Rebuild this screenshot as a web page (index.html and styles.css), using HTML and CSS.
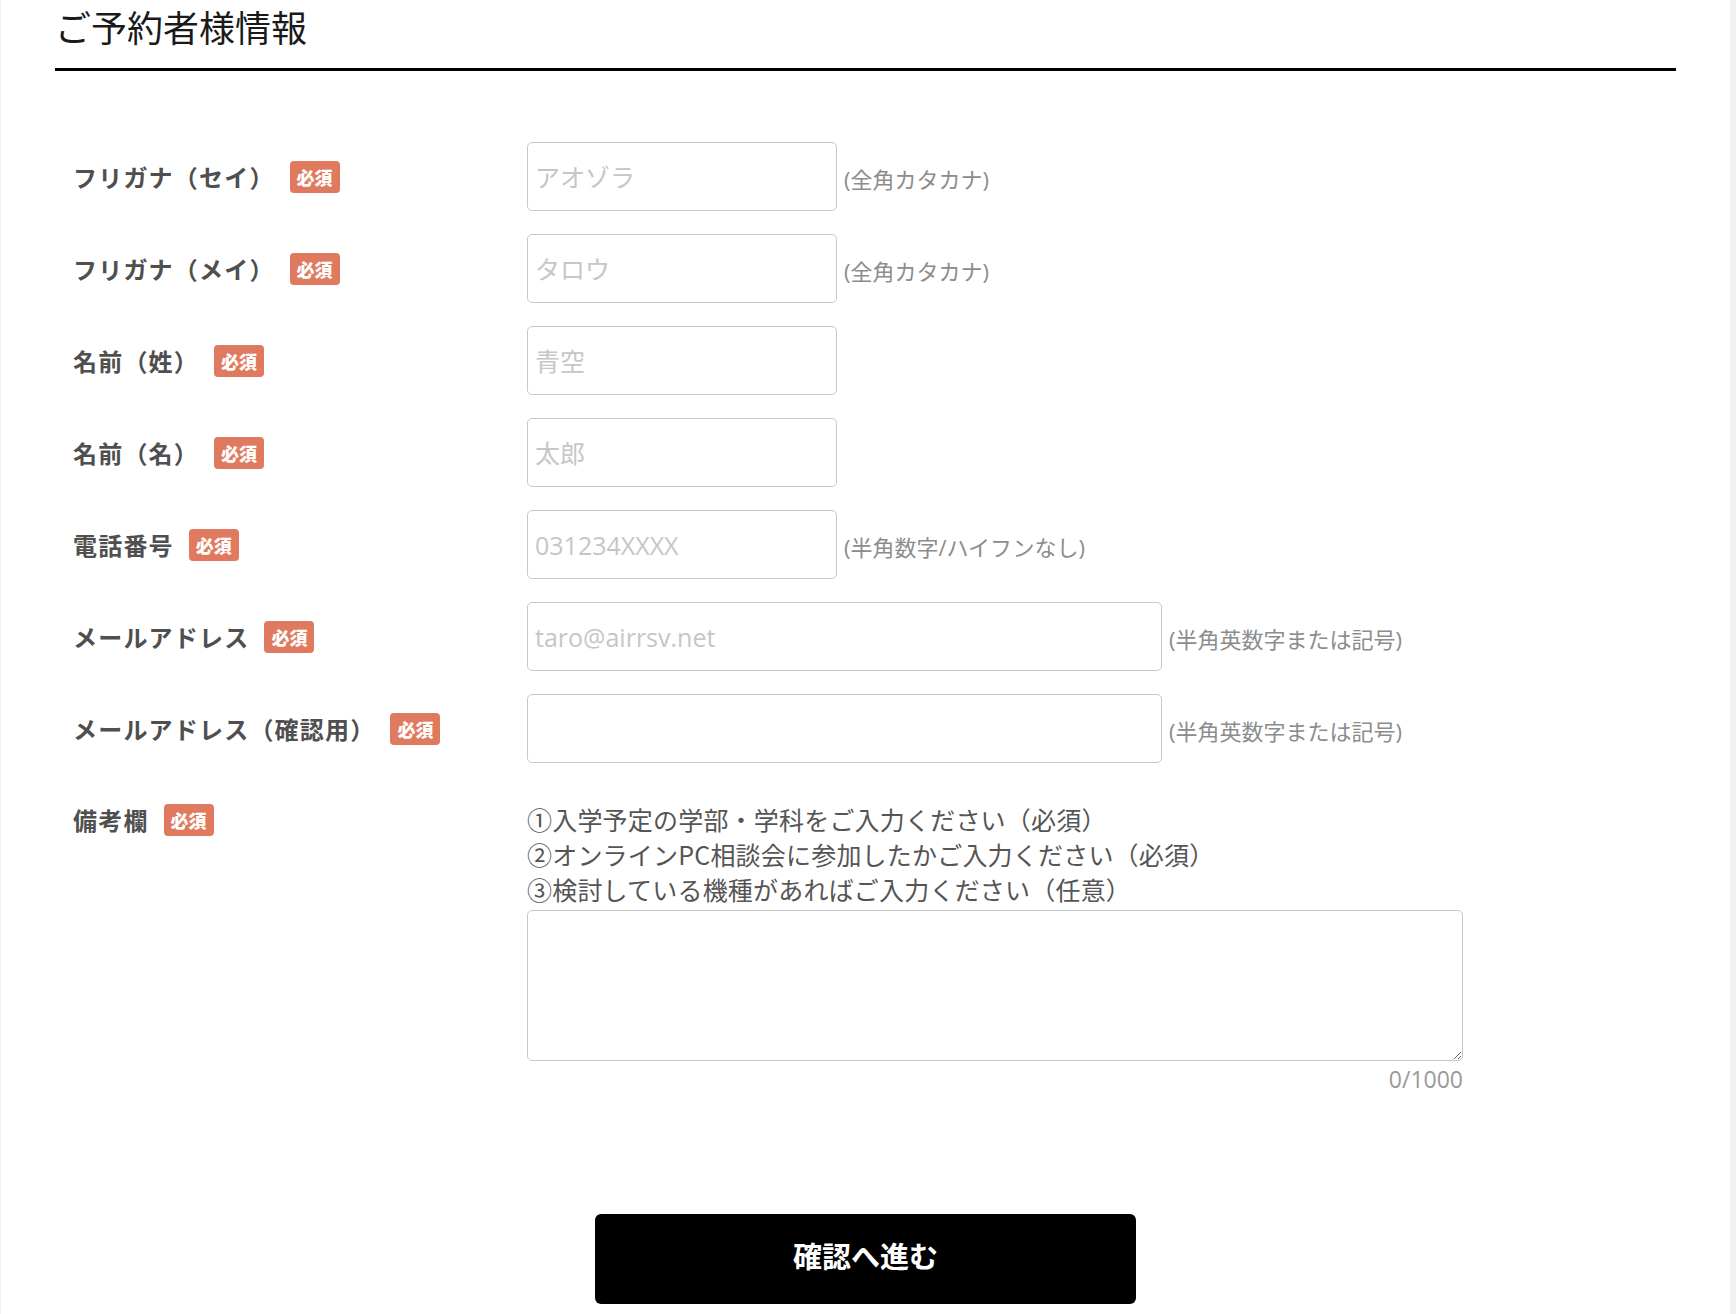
FILE: index.html
```html
<!DOCTYPE html>
<html lang="ja">
<head>
<meta charset="utf-8">
<title>ご予約者様情報</title>
<link rel="stylesheet" href="styles.css">
</head>
<body>
<div class="page">
  <h2 class="section-title">ご予約者様情報</h2>
  <form class="form">
    <div class="row">
      <div class="label"><span class="label-text">フリガナ（セイ）</span><span class="badge">必須</span></div>
      <div class="field"><input class="input" type="text" placeholder="アオゾラ"><span class="hint">(全角カタカナ)</span></div>
    </div>
    <div class="row">
      <div class="label"><span class="label-text">フリガナ（メイ）</span><span class="badge">必須</span></div>
      <div class="field"><input class="input" type="text" placeholder="タロウ"><span class="hint">(全角カタカナ)</span></div>
    </div>
    <div class="row">
      <div class="label"><span class="label-text">名前（姓）</span><span class="badge">必須</span></div>
      <div class="field"><input class="input" type="text" placeholder="青空"></div>
    </div>
    <div class="row">
      <div class="label"><span class="label-text">名前（名）</span><span class="badge">必須</span></div>
      <div class="field"><input class="input" type="text" placeholder="太郎"></div>
    </div>
    <div class="row">
      <div class="label"><span class="label-text">電話番号</span><span class="badge">必須</span></div>
      <div class="field"><input class="input" type="text" placeholder="031234XXXX"><span class="hint">(半角数字/ハイフンなし)</span></div>
    </div>
    <div class="row">
      <div class="label"><span class="label-text">メールアドレス</span><span class="badge">必須</span></div>
      <div class="field"><input class="input input-wide" type="text" placeholder="taro@airrsv.net"><span class="hint">(半角英数字または記号)</span></div>
    </div>
    <div class="row">
      <div class="label"><span class="label-text">メールアドレス（確認用）</span><span class="badge">必須</span></div>
      <div class="field"><input class="input input-wide" type="text"><span class="hint">(半角英数字または記号)</span></div>
    </div>
    <div class="row row-top">
      <div class="label label-top"><span class="label-text">備考欄</span><span class="badge">必須</span></div>
      <div class="field-col">
        <p class="note">①入学予定の学部・学科をご入力ください（必須）<br>②オンラインPC相談会に参加したかご入力ください（必須）<br>③検討している機種があればご入力ください（任意）</p>
        <textarea class="textarea"></textarea>
        <div class="counter">0/1000</div>
      </div>
    </div>
    <div class="actions">
      <button class="submit" type="button">確認へ進む</button>
    </div>
  </form>
</div>
</body>
</html>
```

FILE: styles.css
```css
html, body {
  margin: 0;
  padding: 0;
}
body {
  background: #f1f1f1;
  font-family: "Open Sans", "Noto Sans CJK JP", sans-serif;
  color: #555;
}
.page {
  margin-left: 1px;
  width: 1729px;
  min-height: 1314px;
  background: #fff;
  box-sizing: border-box;
  padding: 0 54px;
}
.section-title {
  margin: 0;
  padding: 2px 0 17px;
  font-size: 36px;
  line-height: 49px;
  font-weight: 400;
  color: #1a1a1a;
  border-bottom: 3px solid #000;
  font-family: "Noto Sans CJK JP", sans-serif;
}
.form {
  margin-top: 71px;
  display: flex;
  flex-direction: column;
  gap: 23px;
}
.row {
  display: flex;
  align-items: center;
  min-height: 69px;
}
.row-top {
  align-items: flex-start;
}
.label {
  width: 472px;
  flex: none;
  box-sizing: border-box;
  padding-left: 18px;
  display: flex;
  align-items: center;
}
.label-top {
  padding-top: 16px;
}
.label-text {
  font-family: "Noto Sans CJK JP", sans-serif;
  font-size: 24px;
  font-weight: 700;
  letter-spacing: 1.2px;
  line-height: 35px;
  color: #4f4f4f;
}
.badge {
  margin-left: 15px;
  width: 50px;
  height: 32px;
  border-radius: 4px;
  background: #e07a5e;
  color: #fff;
  font-family: "Noto Sans CJK JP", sans-serif;
  font-weight: 900;
  font-size: 18px;
  display: inline-flex;
  align-items: center;
  justify-content: center;
}
.field {
  display: flex;
  align-items: center;
}
.input {
  width: 310px;
  height: 69px;
  box-sizing: border-box;
  border: 1px solid #c8c8c8;
  border-radius: 5px;
  padding: 0 7px;
  font-family: "Open Sans", "Noto Sans CJK JP", sans-serif;
  font-size: 25px;
  color: #333;
  background: #fff;
  outline: none;
}
.input::placeholder {
  color: #c6c6c6;
}
.input-wide {
  width: 635px;
}
.hint {
  margin-left: 7px;
  margin-top: 3px;
  font-size: 22px;
  color: #8c8c8c;
  font-family: "Open Sans", "Noto Sans CJK JP", sans-serif;
}
.field-col {
  display: flex;
  flex-direction: column;
  width: 936px;
}
.note {
  margin: 0;
  padding-top: 16px;
  font-family: "Noto Sans CJK JP", sans-serif;
  font-size: 25px;
  letter-spacing: 0.2px;
  line-height: 35px;
  color: #555;
}
.textarea {
  margin-top: 3px;
  width: 936px;
  height: 151px;
  box-sizing: border-box;
  border: 1px solid #c8c8c8;
  border-radius: 5px;
  background: #fff;
  font-size: 22px;
  outline: none;
}
.counter {
  margin-top: 2px;
  text-align: right;
  font-family: "Open Sans", sans-serif;
  font-size: 23px;
  line-height: 32px;
  color: #999;
}
.actions {
  display: flex;
  justify-content: center;
  margin-top: 96px;
}
.submit {
  width: 541px;
  height: 90px;
  padding: 0 0 8px;
  border: none;
  border-radius: 6px;
  background: #000;
  color: #fff;
  font-family: "Noto Sans CJK JP", sans-serif;
  font-weight: 700;
  font-size: 29px;
  line-height: 40px;
  cursor: pointer;
}
```
